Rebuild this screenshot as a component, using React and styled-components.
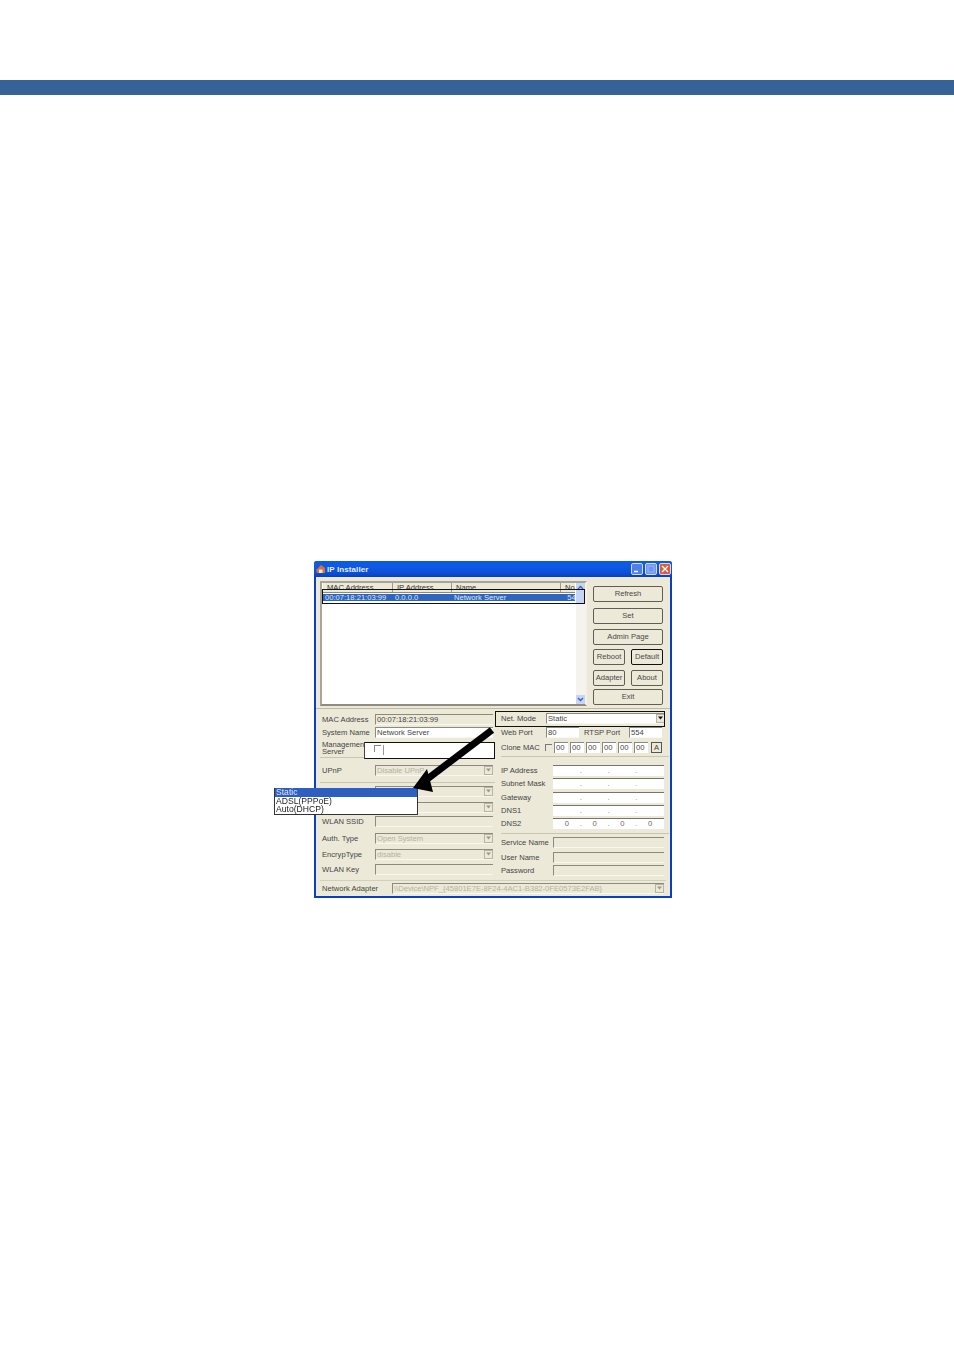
import React from "react";
import styled, { createGlobalStyle } from "styled-components";

const Global = createGlobalStyle`
  html, body { margin: 0; padding: 0; background: #fff; }
  * { box-sizing: border-box; }
`;

const Page = styled.div`
  width: 954px;
  height: 1350px;
  overflow: hidden;
  padding-top: 80px;
  background: #fff;
  font-family: "Liberation Sans", Arial, sans-serif;
`;
const HeaderBar = styled.div`
  height: 15px;
  background: #366397;
`;
const Win = styled.div`
  position: relative;
  margin: 466px 0 0 314px;
  width: 358px;
  height: 337px;
  background: #ece9d8;
  border: 2px solid #0a3fc0;
  border-top: 0;
  border-radius: 3px 3px 0 0;
  display: flex;
  flex-direction: column;
  font-size: 7.6px;
  color: #444;
  filter: blur(0.35px);
`;
const TitleBar = styled.div`
  height: 16px;
  margin: 0 -2px;
  flex: none;
  background: linear-gradient(#0a5be0, #0f5ae6 30%, #0a4fd6 75%, #0a3fbc);
  border-radius: 3px 3px 0 0;
  display: flex;
  align-items: center;
  padding: 0 1px 0 2px;
  color: #e6ecfa;
  font-size: 8px;
  font-weight: bold;
  gap: 1px;
`;
const TitleText = styled.span`
  flex: 1;
  letter-spacing: 0.1px;
`;
const TitleBtn = styled.span`
  width: 12px;
  height: 12px;
  margin-left: 1px;
  border: 1px solid #cfdcf8;
  border-radius: 2px;
  background: ${(p) => (p.$close ? "#dc5c34" : p.$off ? "#6f94ea" : "#4f80e8")};
  display: flex;
  align-items: center;
  justify-content: center;
`;
const TopRow = styled.div`
  display: flex;
  gap: 6px;
  padding: 4px 0 0 4px;
  height: 132px;
  border-bottom: 1px solid #bdb9a6;
  flex: none;
`;
const ListPanel = styled.div`
  position: relative;
  width: 267px;
  height: 125px;
  background: #fff;
  border: 2px solid;
  border-color: #a8a597 #f4f2e8 #8f8c7e #a8a597;
  padding: 0 10px 0 0;
`;
const ListHead = styled.div`
  display: grid;
  grid-template-columns: 70px 59px 109px 18px;
  height: 10px;
  background: #ece9d8;
  border-bottom: 1px solid #888;
  margin-left: 1px;
  line-height: 10px;
  color: #333;
`;
const HeadCell = styled.span`
  padding-left: 4px;
  border-right: 1px solid #999;
  white-space: nowrap;
  overflow: hidden;
`;
const ListRowItem = styled.div`
  display: grid;
  grid-template-columns: 70px 59px 109px 18px;
  height: 7px;
  margin: 1px 0 0 1px;
  background: #2f65bc;
  color: #dfe8f7;
  line-height: 7px;
  white-space: nowrap;
  overflow: hidden;
`;
const ListCell = styled.span`
  padding-left: 2px;
`;
const ScrollBar = styled.div`
  position: absolute;
  top: 0;
  right: 0;
  bottom: 0;
  width: 9px;
  background: #f4f3ee;
  display: flex;
  flex-direction: column;
  justify-content: space-between;
`;
const ScrollPart = styled.div`
  height: ${(p) => p.$h}px;
  background: #c6d5f4;
  color: #3c5fa8;
  display: flex;
  align-items: center;
  justify-content: center;
`;
const ButtonCol = styled.div`
  width: 70px;
  padding-top: 5px;
  display: flex;
  flex-direction: column;
`;
const Btn = styled.div`
  height: ${(p) => p.$h || 16}px;
  width: ${(p) => p.$w || "100%"};
  margin-bottom: ${(p) => p.$mb || 0}px;
  padding-bottom: 1px;
  background: #ece9d8;
  border: ${(p) => (p.$def ? "1.5px solid #111" : "1px solid #5f5d54")};
  border-radius: 2px;
  display: flex;
  align-items: center;
  justify-content: center;
  white-space: nowrap;
  color: #484848;
`;
const BtnPair = styled.div`
  display: flex;
  justify-content: space-between;
  margin-bottom: ${(p) => p.$mb || 0}px;
`;
const Bottom = styled.div`
  display: grid;
  grid-template-columns: 181px 168px;
  padding: 4px 0 0 4px;
  flex: none;
`;
const LeftCol = styled.div`
  display: flex;
  flex-direction: column;
  width: 175px;
`;
const Row = styled.div`
  height: ${(p) => p.$h}px;
  display: flex;
  align-items: center;
  padding-left: 2px;
  border-bottom: ${(p) => (p.$line ? "1px solid #c9c5b2" : "0")};
  white-space: nowrap;
`;
const Label = styled.span`
  width: ${(p) => p.$w || 53}px;
  padding-left: ${(p) => p.$pl || 0}px;
  flex: none;
  line-height: 7px;
`;
const Field = styled.div`
  width: ${(p) => p.$w || "118px"};
  height: ${(p) => p.$h || 11}px;
  margin-left: ${(p) => p.$ml || 0}px;
  flex: none;
  background: ${(p) => (p.$white ? "#fff" : "#ece9d8")};
  border-top: 1px solid #8c8a7c;
  border-left: 1px solid #8c8a7c;
  border-bottom: 1px solid #f8f7f0;
  color: ${(p) => (p.$dis ? "#b5b2a2" : "#444")};
  padding-left: 1px;
  line-height: 9px;
  display: flex;
  align-items: center;
  justify-content: space-between;
  overflow: hidden;
`;
const Drop = styled.span`
  width: 9px;
  height: 9px;
  flex: none;
  border: 1px solid #b7b4a5;
  background: #ece9d8;
  color: ${(p) => (p.$on ? "#111" : "#9c9a8c")};
  display: flex;
  align-items: center;
  justify-content: center;
`;
const RightCol = styled.div`
  display: flex;
  flex-direction: column;
  width: 168px;
  margin-top: -2px;
`;
const RRow = styled.div`
  height: ${(p) => p.$h}px;
  margin-top: ${(p) => p.$mt || 0}px;
  display: flex;
  align-items: center;
  border-bottom: ${(p) => (p.$line ? "1px solid #c9c5b2" : "0")};
  white-space: nowrap;
`;
const Octets = styled.div`
  width: 111px;
  height: 11px;
  flex: none;
  background: #fff;
  border-top: 1px solid #77756a;
  display: grid;
  grid-template-columns: repeat(4, 1fr);
  text-align: center;
  line-height: 9px;
  color: #666;
`;
const Octet = styled.span`
  position: relative;
`;
const Dot = styled.span`
  position: absolute;
  right: -1px;
  top: 0;
  color: #888;
`;
const Check = styled.span`
  width: 7px;
  height: 7px;
  flex: none;
  margin-right: 2px;
  border-top: 1px solid #777;
  border-left: 1px solid #777;
`;
const MacBox = styled.span`
  width: 14px;
  height: 11px;
  margin-right: 2px;
  flex: none;
  background: #fff;
  border-top: 1px solid #888;
  border-left: 1px solid #888;
  line-height: 9px;
  padding-left: 1px;
`;
const SmallBtn = styled.span`
  width: 11px;
  height: 11px;
  margin-left: 1px;
  border: 1px solid #555;
  display: flex;
  align-items: center;
  justify-content: center;
`;
const AdapterRow = styled.div`
  display: flex;
  align-items: center;
  height: 15px;
  margin: 2px 4px 0 4px;
  padding-left: 2px;
  border-top: 1px solid #d3cfbd;
  white-space: nowrap;
`;
const Highlight = styled.div`
  position: absolute;
  left: ${(p) => p.$x}px;
  top: ${(p) => p.$y}px;
  width: ${(p) => p.$w}px;
  height: ${(p) => p.$h}px;
  border: 1px solid #111;
`;
const MgmtOverlay = styled(Highlight)`
  background: #fff;
  border-left-color: #444;
  display: flex;
  align-items: flex-start;
  padding: 2px 0 0 9px;
`;
const MgmtCheck = styled.span`
  width: 7px;
  height: 7px;
  border-top: 1px solid #888;
  border-left: 1px solid #888;
  position: relative;
  &::after {
    content: "";
    position: absolute;
    left: 8px;
    top: -1px;
    width: 1px;
    height: 10px;
    background: #999;
  }
`;
const NetOverlay = styled(Highlight)`
  border-width: 1px 1px 1.5px;
  pointer-events: none;
`;
const Menu = styled.div`
  position: absolute;
  left: -42px;
  top: 227px;
  width: 144px;
  height: 27px;
  background: #fff;
  border: 1px solid #333;
  border-top: 0;
  font-size: 8.6px;
  line-height: 8.5px;
  color: #222;
`;
const MenuItem = styled.div`
  height: 8.5px;
  padding-left: 1px;
  background: ${(p) => (p.$sel ? "#2d5fc0" : "transparent")};
  color: ${(p) => (p.$sel ? "#dfe8fa" : "#222")};
`;
const ArrowSvg = styled.svg`
  position: absolute;
  left: 90px;
  top: 160px;
`;

const Tri = ({ up }) => (
  <svg width="7" height="5" viewBox="0 0 7 5">
    <path d={up ? "M1 4 L3.5 1.5 L6 4" : "M1 1 L3.5 3.5 L6 1"} fill="none" stroke="currentColor" strokeWidth="1.3" />
  </svg>
);
const DropTri = () => (
  <svg width="5" height="4" viewBox="0 0 5 4">
    <path d="M0 0.5 H5 L2.5 3.5 Z" fill="currentColor" />
  </svg>
);

const Select = ({ text, w, on, white, ml }) => (
  <Field $w={w} $dis={!on} $white={white} $ml={ml}>
    <span>{text}</span>
    <Drop $on={on}><DropTri /></Drop>
  </Field>
);

const IpRow = ({ label, zero, h }) => (
  <RRow $h={h}>
    <Label $w={52}>{label}</Label>
    <Octets>
      {[0, 1, 2, 3].map((i) => (
        <Octet key={i}>
          {zero ? "0" : ""}
          {i < 3 && <Dot>.</Dot>}
        </Octet>
      ))}
    </Octets>
  </RRow>
);

export default function App() {
  return (
    <Page>
      <Global />
      <HeaderBar />
      <Win>
        <TitleBar>
          <svg width="10" height="10" viewBox="0 0 10 10">
            <path d="M0 6 L5 1 L9 4 V9 H1 Z" fill="#d9703a" />
            <path d="M3 5.5 H6.5 V9 H3 Z" fill="#f3e6d0" />
          </svg>
          <TitleText>IP Installer</TitleText>
          <TitleBtn>
            <svg width="8" height="8" viewBox="0 0 8 8"><path d="M1 6.5 H5" stroke="#fff" strokeWidth="1.5" /></svg>
          </TitleBtn>
          <TitleBtn $off>
            <svg width="8" height="8" viewBox="0 0 8 8"><rect x="1" y="1" width="6" height="6" fill="none" stroke="#9db6f0" /></svg>
          </TitleBtn>
          <TitleBtn $close>
            <svg width="8" height="8" viewBox="0 0 8 8"><path d="M1 1 L7 7 M7 1 L1 7" stroke="#fff" strokeWidth="1.4" /></svg>
          </TitleBtn>
        </TitleBar>

        <TopRow>
          <ListPanel>
            <ListHead>
              <HeadCell>MAC Address</HeadCell>
              <HeadCell>IP Address</HeadCell>
              <HeadCell>Name</HeadCell>
              <HeadCell>No</HeadCell>
            </ListHead>
            <ListRowItem>
              <ListCell>00:07:18:21:03:99</ListCell>
              <ListCell>0.0.0.0</ListCell>
              <ListCell>Network Server</ListCell>
              <ListCell>&nbsp;&nbsp;54</ListCell>
            </ListRowItem>
            <ScrollBar>
              <div>
                <ScrollPart $h={9}><Tri up /></ScrollPart>
                <ScrollPart $h={11} />
              </div>
              <ScrollPart $h={9}><Tri /></ScrollPart>
            </ScrollBar>
          </ListPanel>
          <ButtonCol>
            <Btn $mb={6}>Refresh</Btn>
            <Btn $mb={5}>Set</Btn>
            <Btn $mb={4}>Admin Page</Btn>
            <BtnPair $mb={5}>
              <Btn $w="32px">Reboot</Btn>
              <Btn $w="32px" $def>Default</Btn>
            </BtnPair>
            <BtnPair $mb={3}>
              <Btn $w="32px">Adapter</Btn>
              <Btn $w="32px">About</Btn>
            </BtnPair>
            <Btn>Exit</Btn>
          </ButtonCol>
        </TopRow>

        <Bottom>
          <LeftCol>
            <Row $h={13}><Label>MAC Address</Label><Field>00:07:18:21:03:99</Field></Row>
            <Row $h={13}><Label>System Name</Label><Field $white>Network Server</Field></Row>
            <Row $h={19} $line><Label>Management<br />Server</Label></Row>
            <Row $h={25} $line><Label>UPnP</Label><Select text="Disable UPnP" /></Row>
            <Row $h={16}><Label /><Select text="" /></Row>
            <Row $h={16}><Label /><Select text="" /></Row>
            <Row $h={13}><Label>WLAN SSID</Label><Field /></Row>
            <Row $h={20}><Label>Auth. Type</Label><Select text="Open System" /></Row>
            <Row $h={12}><Label>EncrypType</Label><Select text="disable" /></Row>
            <Row $h={18}><Label>WLAN Key</Label><Field /></Row>
          </LeftCol>
          <RightCol>
            <RRow $h={14}>
              <Label $w={45}>Net. Mode</Label>
              <Select text="Static" w="119px" on white />
            </RRow>
            <RRow $h={14}>
              <Label $w={45}>Web Port</Label>
              <Field $w="33px" $white>80</Field>
              <Label $w={50} $pl={5}>RTSP Port</Label>
              <Field $w="33px" $white>554</Field>
            </RRow>
            <RRow $h={18} $line>
              <Label $w={44}>Clone MAC</Label>
              <Check />
              {[0, 1, 2, 3, 4, 5].map((i) => <MacBox key={i}>00</MacBox>)}
              <SmallBtn>A</SmallBtn>
            </RRow>
            <RRow $h={7} />
            <IpRow h={13} label="IP Address" />
            <IpRow h={13} label="Subnet Mask" />
            <IpRow h={14} label="Gateway" />
            <IpRow h={13} label="DNS1" />
            <IpRow h={13} label="DNS2" zero />
            <RRow $h={4} $line />
            <RRow $h={15} $mt={1}><Label $w={52}>Service Name</Label><Field $w="111px" /></RRow>
            <RRow $h={14}><Label $w={52}>User Name</Label><Field $w="111px" /></RRow>
            <RRow $h={13}><Label $w={52}>Password</Label><Field $w="111px" /></RRow>
          </RightCol>
        </Bottom>
        <AdapterRow>
          <Label $w={70}>Network Adapter</Label>
          <Select text={"\\\\Device\\NPF_{45801E7E-8F24-4AC1-B382-0FE0573E2FAB}"} w="272px" />
        </AdapterRow>

        <Highlight $x={6} $y={28} $w={263} $h={15} />
        <MgmtOverlay $x={48} $y={181} $w={131} $h={17}><MgmtCheck /></MgmtOverlay>
        <NetOverlay $x={179} $y={150} $w={170} $h={16} />
        <Menu>
          <MenuItem $sel>Static</MenuItem>
          <MenuItem>ADSL(PPPoE)</MenuItem>
          <MenuItem>Auto(DHCP)</MenuItem>
        </Menu>
        <ArrowSvg width="95" height="76" viewBox="0 0 95 76">
          <path d="M86 9 L20 59" stroke="#000" strokeWidth="7" fill="none" />
          <path d="M7 67 L21 48 L27 71 Z" fill="#000" />
        </ArrowSvg>
      </Win>
    </Page>
  );
}
